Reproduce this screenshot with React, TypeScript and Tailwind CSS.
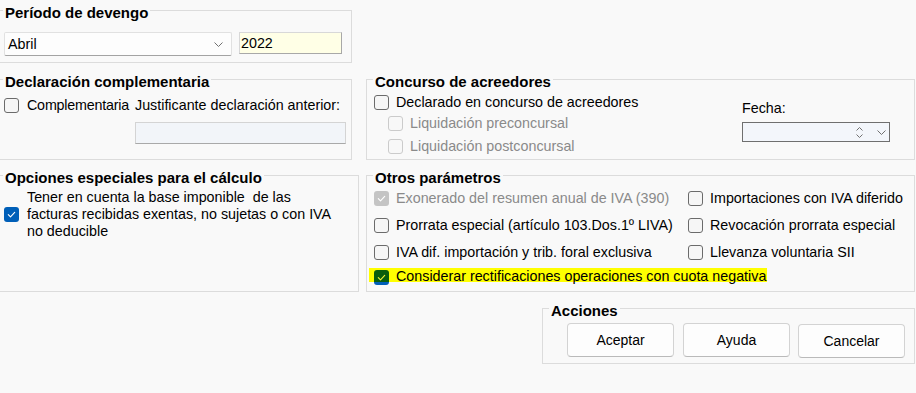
import React from "react";

// ── Checkbox ──────────────────────────────────────────────────────────────────
type CheckKind = "off" | "offDisabled" | "on" | "onDisabled" | "onMarked";

const CHECK_BOX: Record<CheckKind, string> = {
  off: "border border-[#6b6b6b] bg-[#f6f6f6]",
  offDisabled: "border border-[#cbcbcb] bg-[#f8f8f8]",
  on: "bg-[#005fb8]",
  onDisabled: "bg-[#c4c4c4]",
  onMarked: "bg-[linear-gradient(to_bottom,#0a5e0c_0px,#0a5e0c_12px,#005fb8_12px)]",
};

const TICK: Partial<Record<CheckKind, string>> = {
  on: "#ffffff",
  onDisabled: "#ffffff",
  onMarked: "#f2f23a",
};

function Check({ kind = "off", className = "" }: { kind?: CheckKind; className?: string }) {
  const tick = TICK[kind];
  return (
    <span className={`shrink-0 w-[15px] h-[15px] rounded-[3px] flex items-center justify-center ${CHECK_BOX[kind]} ${className}`}>
      {tick && (
        <svg viewBox="0 0 15 15" className="w-[15px] h-[15px]" fill="none">
          <path d="M4.3 7.7 6.5 9.8 10.7 5.4" stroke={tick} strokeWidth="1.1" strokeLinecap="round" strokeLinejoin="round" />
        </svg>
      )}
    </span>
  );
}

function Chevron() {
  return (
    <svg width="9" height="5" viewBox="0 0 9 5" fill="none">
      <path d="M0.5 0.5 4.5 4.5 8.5 0.5" stroke="#707070" strokeWidth="1" />
    </svg>
  );
}

// ── Group box (legend sits on the top border) ────────────────────────────────
function Group({ title, className = "", children }: { title: string; className?: string; children?: React.ReactNode }) {
  return (
    <fieldset className={`border border-[#dcdcdc] min-w-0 shrink-0 ${className}`}>
      <legend className="ml-[6px] px-[2px] pt-[5px] text-[15px] leading-[15px] font-bold">{title}</legend>
      {children}
    </fieldset>
  );
}

function Button({ label, className = "" }: { label: string; className?: string }) {
  return (
    <div className={`w-[107px] h-[34px] flex items-center justify-center bg-[#fdfdfd] border border-[#d3d3d3] border-b-[#bababa] rounded-[4px] ${className}`}>
      {label}
    </div>
  );
}

export default function App() {
  return (
    <div className="w-[916px] h-[393px] bg-[#f9f9f9] overflow-hidden font-['Liberation_Sans',Arial,sans-serif] text-[14.3px] leading-[17px] text-black">
      {/* Período de devengo */}
      <Group title="Período de devengo" className="-ml-[4px] w-[356px] h-[63px]">
        <div className="flex items-start mt-[12px] ml-[7px]">
          <div className="w-[228px] h-[24px] flex items-center justify-between pl-[3px] pr-[8px] bg-[#fdfdfd] border border-[#e1e1e1] border-b-[#a3a3a3] rounded-[2px]">
            <span>Abril</span>
            <Chevron />
          </div>
          <div className="ml-[7px] w-[103px] h-[22px] flex items-center pl-[1px] bg-[#ffffe6] border border-[#d8d8d8] border-r-[#a8a8a8] border-b-[#a8a8a8]">
            2022
          </div>
        </div>
      </Group>

      <div className="flex mt-[6px]">
        {/* Declaración complementaria */}
        <Group title="Declaración complementaria" className="-ml-[4px] w-[356px] h-[91px]">
          <div className="flex mt-[7px] ml-[7px]">
            <div className="w-[131px] h-[18px] flex items-center">
              <Check />
              <span className="ml-[8px] tracking-[-0.2px]">Complementaria</span>
            </div>
            <div className="flex flex-col">
              <div className="h-[18px] flex items-center">Justificante declaración anterior:</div>
              <div className="mt-[8px] w-[211px] h-[22px] bg-[#f2f5f9] border border-[#d4d4d4] border-b-[#a9a9a9]" />
            </div>
          </div>
        </Group>

        {/* Concurso de acreedores */}
        <Group title="Concurso de acreedores" className="ml-[14px] w-[549px] h-[91px]">
          <div className="flex">
            <div className="w-[375px] flex flex-col">
              <div className="mt-[4px] ml-[7px] h-[18px] flex items-center">
                <Check />
                <span className="ml-[7px]">Declarado en concurso de acreedores</span>
              </div>
              <div className="mt-[3px] ml-[21px] h-[18px] flex items-center text-[#8a8a8a]">
                <Check kind="offDisabled" />
                <span className="ml-[7px]">Liquidación preconcursal</span>
              </div>
              <div className="mt-[5px] ml-[21px] h-[18px] flex items-center text-[#8a8a8a]">
                <Check kind="offDisabled" />
                <span className="ml-[7px]">Liquidación postconcursal</span>
              </div>
            </div>
            <div className="flex flex-col mt-[10px]">
              <div className="h-[18px] flex items-center">Fecha:</div>
              <div className="mt-[5px] w-[148px] h-[20px] flex items-center justify-end pr-[3px] bg-[#f3f6fb] border border-[#6f6f6f]">
                <svg width="7" height="11" viewBox="0 0 7 11" fill="none">
                  <path d="M0.5 3.5 3.5 0.5 6.5 3.5M0.5 7.5 3.5 10.5 6.5 7.5" stroke="#707070" strokeWidth="1" />
                </svg>
                <span className="ml-[14px] flex">
                  <Chevron />
                </span>
              </div>
            </div>
          </div>
        </Group>
      </div>

      <div className="flex mt-[5px]">
        {/* Opciones especiales para el cálculo */}
        <Group title="Opciones especiales para el cálculo" className="-ml-[4px] w-[363px] h-[127px]">
          <div className="flex items-center mt-[4px] ml-[7px]">
            <Check kind="on" />
            <div className="ml-[8px] flex flex-col whitespace-pre">
              <span>Tener en cuenta la base imponible  de las</span>
              <span>facturas recibidas exentas, no sujetas o con IVA</span>
              <span>no deducible</span>
            </div>
          </div>
        </Group>

        {/* Otros parámetros */}
        <Group title="Otros parámetros" className="ml-[7px] w-[549px] h-[127px]">
          <div className="flex flex-col">
            <div className="h-[27px] flex items-center">
              <div className="w-[321px] pl-[7px] flex items-center text-[#8a8a8a]">
                <Check kind="onDisabled" />
                <span className="ml-[7px]">Exonerado del resumen anual de IVA (390)</span>
              </div>
              <div className="flex items-center">
                <Check />
                <span className="ml-[7px]">Importaciones con IVA diferido</span>
              </div>
            </div>
            <div className="h-[27px] flex items-center">
              <div className="w-[321px] pl-[7px] flex items-center">
                <Check />
                <span className="ml-[7px]">Prorrata especial (artículo 103.Dos.1º LIVA)</span>
              </div>
              <div className="flex items-center">
                <Check />
                <span className="ml-[7px]">Revocación prorrata especial</span>
              </div>
            </div>
            <div className="h-[27px] flex items-center">
              <div className="w-[321px] pl-[7px] flex items-center">
                <Check />
                <span className="ml-[7px]">IVA dif. importación y trib. foral exclusiva</span>
              </div>
              <div className="flex items-center">
                <Check />
                <span className="ml-[7px]">Llevanza voluntaria SII</span>
              </div>
            </div>
            {/* marked row */}
            <div className="mt-[2px] ml-[2px] w-[398px] h-[14px] flex items-start bg-[#ffff00]">
              <Check kind="onMarked" className="mt-[2px] ml-[5px]" />
              <span className="ml-[7px] leading-[14px] pt-[1px] whitespace-nowrap">Considerar rectificaciones operaciones con cuota negativa</span>
            </div>
          </div>
        </Group>
      </div>

      {/* Acciones */}
      <Group title="Acciones" className="ml-[542px] mt-[6px] w-[373px] h-[66px]">
        <div className="flex items-start mt-[5px] ml-[24px] text-[14px]">
          <Button label="Aceptar" />
          <Button label="Ayuda" className="ml-[9px]" />
          <Button label="Cancelar" className="ml-[8px] mt-[1px]" />
        </div>
      </Group>
    </div>
  );
}
